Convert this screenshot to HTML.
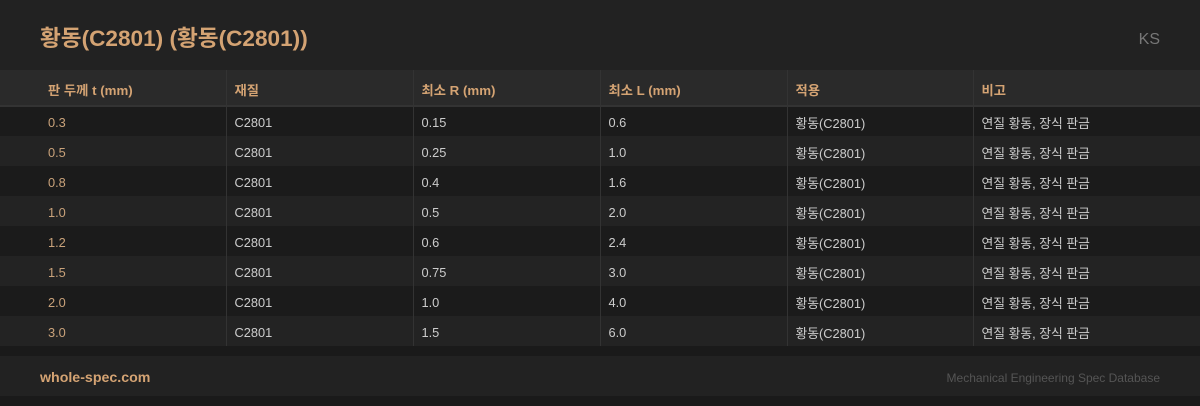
<!DOCTYPE html>
<html><head><meta charset="utf-8"><style>
*{margin:0;padding:0;box-sizing:border-box}
body{width:1200px;height:406px;background:#1a1a1a;font-family:"Liberation Sans","Noto Sans CJK KR",sans-serif;overflow:hidden;position:relative}
.top{position:absolute;left:0;top:0;width:1200px;height:70px;background:#222}
.title{position:absolute;left:40px;top:25px;font-size:22.6px;font-weight:bold;color:#d4a373;line-height:28px}
.ks{position:absolute;right:40px;top:30px;font-size:16px;color:#777;line-height:20px}
table{position:absolute;left:0;top:70px;width:1200px;border-collapse:collapse;table-layout:fixed}
th{height:36px;background:#2a2a2a;color:#d4a373;font-size:13.3px;font-weight:bold;text-align:left;padding:4px 0 0 8px;border-bottom:2px solid #333}
td{height:30px;font-size:12.8px;color:#ccc;padding:2px 0 0 8px}
th+th,td+td{border-left:1px solid #333}
th:first-child,td:first-child{padding-left:48px}
td:first-child{color:#c9a27a}
tr.o td{background:#1b1b1b}
tr.e td{background:#232323}
.foot{position:absolute;left:0;top:356px;width:1200px;height:40px;background:#222}
.site{position:absolute;left:40px;top:14px;font-size:14.2px;font-weight:bold;color:#d4a373}
.db{position:absolute;right:40px;top:15px;font-size:12px;color:#555}
</style></head><body>
<div class="top"><div class="title">황동(C2801) (황동(C2801))</div><div class="ks">KS</div></div>
<table>
<colgroup><col style="width:226px"><col style="width:187px"><col style="width:187px"><col style="width:187px"><col style="width:186px"><col style="width:227px"></colgroup>
<tr><th>판 두께 t (mm)</th><th>재질</th><th>최소 R (mm)</th><th>최소 L (mm)</th><th>적용</th><th>비고</th></tr>
<tr class="o"><td>0.3</td><td>C2801</td><td>0.15</td><td>0.6</td><td>황동(C2801)</td><td>연질 황동, 장식 판금</td></tr>
<tr class="e"><td>0.5</td><td>C2801</td><td>0.25</td><td>1.0</td><td>황동(C2801)</td><td>연질 황동, 장식 판금</td></tr>
<tr class="o"><td>0.8</td><td>C2801</td><td>0.4</td><td>1.6</td><td>황동(C2801)</td><td>연질 황동, 장식 판금</td></tr>
<tr class="e"><td>1.0</td><td>C2801</td><td>0.5</td><td>2.0</td><td>황동(C2801)</td><td>연질 황동, 장식 판금</td></tr>
<tr class="o"><td>1.2</td><td>C2801</td><td>0.6</td><td>2.4</td><td>황동(C2801)</td><td>연질 황동, 장식 판금</td></tr>
<tr class="e"><td>1.5</td><td>C2801</td><td>0.75</td><td>3.0</td><td>황동(C2801)</td><td>연질 황동, 장식 판금</td></tr>
<tr class="o"><td>2.0</td><td>C2801</td><td>1.0</td><td>4.0</td><td>황동(C2801)</td><td>연질 황동, 장식 판금</td></tr>
<tr class="e"><td>3.0</td><td>C2801</td><td>1.5</td><td>6.0</td><td>황동(C2801)</td><td>연질 황동, 장식 판금</td></tr>
</table>
<div class="foot"><div class="site">whole-spec.com</div><div class="db">Mechanical Engineering Spec Database</div></div>
</body></html>
